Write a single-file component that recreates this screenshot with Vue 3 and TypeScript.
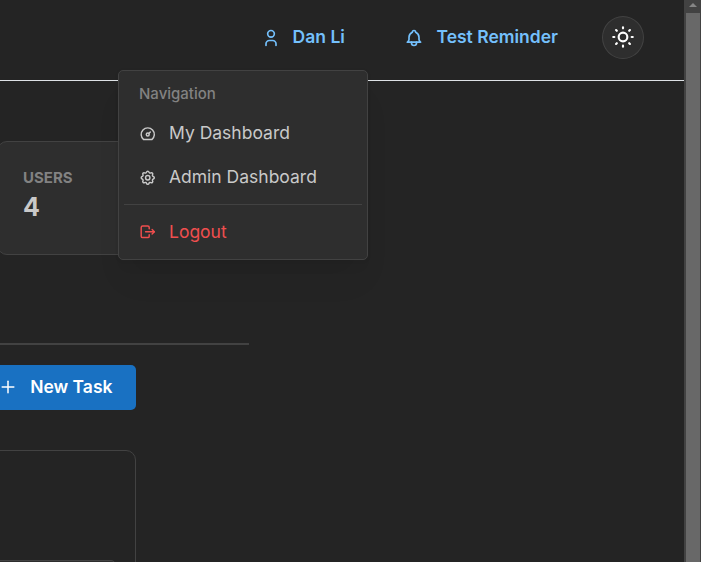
<script setup lang="ts">
interface NavItem {
  label: string
  icon: string[]
}

const icons: Record<string, string[]> = {
  user: ['M8 7a4 4 0 1 0 8 0a4 4 0 0 0-8 0', 'M6 21v-2a4 4 0 0 1 4-4h4a4 4 0 0 1 4 4v2'],
  bell: ['M10 5a2 2 0 1 1 4 0a7 7 0 0 1 4 6v3a4 4 0 0 0 2 3h-16a4 4 0 0 0 2-3v-3a7 7 0 0 1 4-6', 'M9 17v1a3 3 0 0 0 6 0v-1'],
  sun: ['M8 12a4 4 0 1 0 8 0a4 4 0 1 0-8 0', 'M3 12h1m8-9v1m8 8h1m-9 8v1m-6.4-15.4l.7.7m12.1-.7l-.7.7m0 11.4l.7.7m-12.1-.7l-.7.7'],
  dashboard: ['M10 13a2 2 0 1 0 4 0a2 2 0 1 0-4 0', 'M13.45 11.55l2.05-2.05', 'M6.4 20a9 9 0 1 1 11.2 0z'],
  settings: [
    'M10.325 4.317c.426-1.756 2.924-1.756 3.35 0a1.724 1.724 0 0 0 2.573 1.066c1.543-.94 3.31.826 2.37 2.37a1.724 1.724 0 0 0 1.065 2.572c1.756.426 1.756 2.924 0 3.35a1.724 1.724 0 0 0-1.066 2.573c.94 1.543-.826 3.31-2.37 2.37a1.724 1.724 0 0 0-2.572 1.065c-.426 1.756-2.924 1.756-3.35 0a1.724 1.724 0 0 0-2.573-1.066c-1.543.94-3.31-.826-2.37-2.37a1.724 1.724 0 0 0-1.065-2.572c-1.756-.426-1.756-2.924 0-3.35a1.724 1.724 0 0 0 1.066-2.573c-.94-1.543.826-3.31 2.37-2.37c1 .608 2.296.07 2.572-1.065z',
    'M9 12a3 3 0 1 0 6 0a3 3 0 0 0-6 0',
  ],
  logout: ['M14 8v-2a2 2 0 0 0-2-2h-7a2 2 0 0 0-2 2v12a2 2 0 0 0 2 2h7a2 2 0 0 0 2-2v-2', 'M9 12h12l-3-3', 'M18 15l3-3'],
  plus: ['M12 5v14', 'M5 12h14'],
}

const links: NavItem[] = [
  { label: 'Dan Li', icon: icons.user },
  { label: 'Test Reminder', icon: icons.bell },
]

const menuItems: NavItem[] = [
  { label: 'My Dashboard', icon: icons.dashboard },
  { label: 'Admin Dashboard', icon: icons.settings },
]
</script>

<template>
  <div class="window">
    <div class="page">
      <header class="header">
        <button v-for="link in links" :key="link.label" class="link">
          <svg class="icon" viewBox="0 0 24 24"><path v-for="d in link.icon" :key="d" :d="d" /></svg>
          <span>{{ link.label }}</span>
        </button>
        <button class="theme" aria-label="Toggle theme">
          <svg class="icon" viewBox="0 0 24 24"><path v-for="d in icons.sun" :key="d" :d="d" /></svg>
        </button>
      </header>

      <main class="main">
        <section class="stat">
          <div class="stat-label">USERS</div>
          <div class="stat-value">4</div>
        </section>
        <div class="rule"></div>
        <button class="new-task">
          <svg class="icon" viewBox="0 0 24 24"><path v-for="d in icons.plus" :key="d" :d="d" /></svg>
          <span>New Task</span>
        </button>
        <section class="panel"><div class="inner"></div></section>
      </main>

      <nav class="menu">
        <div class="menu-label">Navigation</div>
        <button v-for="item in menuItems" :key="item.label" class="menu-item">
          <svg class="icon" viewBox="0 0 24 24"><path v-for="d in item.icon" :key="d" :d="d" /></svg>
          <span>{{ item.label }}</span>
        </button>
        <div class="divider"></div>
        <button class="menu-item danger">
          <svg class="icon" viewBox="0 0 24 24"><path v-for="d in icons.logout" :key="d" :d="d" /></svg>
          <span>Logout</span>
        </button>
      </nav>
    </div>
    <div class="scrollbar">
      <div class="arrow"></div>
      <div class="thumb"></div>
    </div>
  </div>
</template>

<style>
body {
  margin: 0;
  background: #242424;
}
</style>

<style scoped>
.window,
.window * {
  box-sizing: border-box;
}
.window {
  display: flex;
  width: 701px;
  height: 562px;
  overflow: hidden;
  background: #242424;
  color: #c9c9c9;
  font-family: Inter, "Liberation Sans", sans-serif;
}
button {
  display: flex;
  align-items: center;
  margin: 0;
  padding: 0;
  border: 0;
  background: none;
  color: inherit;
  font: inherit;
}
.icon {
  flex: none;
  fill: none;
  stroke: currentColor;
  stroke-width: 2;
  stroke-linecap: round;
  stroke-linejoin: round;
}
.page {
  position: relative;
  flex: none;
  width: 684px;
  overflow: hidden;
}
.header {
  display: flex;
  align-items: center;
  justify-content: flex-end;
  height: 81px;
  padding: 0 40px 6px 0;
  border-bottom: 1px solid #dee2e6;
}
.link {
  gap: 12px;
  margin-right: 44px;
  color: #74c0fc;
  font-size: 17.5px;
  font-weight: 600;
  line-height: 22px;
  white-space: nowrap;
}
.link:first-child {
  margin-right: 59.6px;
}
.link .icon {
  width: 20px;
  height: 20px;
  margin-top: 2px;
}
.theme {
  justify-content: center;
  width: 42px;
  height: 43px;
  padding-right: 1px;
  border: 1px solid #424242;
  border-radius: 50%;
  background: #2e2e2e;
  color: #fff;
}
.theme .icon {
  width: 26px;
  height: 26px;
}
.main {
  display: flex;
  flex-direction: column;
  align-items: flex-start;
  padding-top: 60px;
}
.stat {
  width: 230px;
  height: 114px;
  margin-left: -3px;
  padding: 25px 25px 0;
  border: 1px solid #424242;
  border-radius: 10px;
  background: #2e2e2e;
}
.stat-label {
  color: #828282;
  font-size: 15px;
  font-weight: 700;
  line-height: 22px;
}
.stat-value {
  font-size: 25px;
  font-weight: 700;
  line-height: 36px;
}
.rule {
  width: 249px;
  height: 2px;
  margin-top: 88px;
  background: #424242;
}
.new-task {
  justify-content: flex-end;
  gap: 12px;
  width: 146px;
  height: 45px;
  margin: 20px 0 0 -10px;
  padding: 0 23.5px 1px 0;
  border-radius: 5px;
  background: #1971c2;
  color: #fff;
  font-size: 17.5px;
  font-weight: 600;
  line-height: 22px;
  white-space: nowrap;
}
.new-task .icon {
  width: 20px;
  height: 20px;
  stroke-width: 1.8;
}
.panel {
  width: 146px;
  height: 180px;
  margin: 40px 0 0 -10px;
  padding: 109px 19px 0 0;
  border: 1px solid #424242;
  border-radius: 10px;
}
.inner {
  height: 60px;
  border: 1px solid #424242;
  border-radius: 5px;
  background: #2e2e2e;
}
.menu {
  position: absolute;
  top: 70px;
  left: 118px;
  width: 250px;
  height: 190px;
  padding: 4px 5px;
  border: 1px solid #424242;
  border-radius: 5px;
  background: #2e2e2e;
  box-shadow: 0 1px 4px rgba(0, 0, 0, 0.05), 0 25px 31px -6px rgba(0, 0, 0, 0.05), 0 12px 12px -6px rgba(0, 0, 0, 0.04);
}
.menu-label {
  height: 36px;
  padding: 0 15px;
  color: #828282;
  font-size: 15px;
  font-weight: 500;
  line-height: 37px;
}
.menu-item {
  gap: 12.5px;
  width: 100%;
  height: 44px;
  padding: 0 15px;
  font-size: 17.5px;
  line-height: 22px;
}
.menu-item .icon {
  width: 17.5px;
  height: 17.5px;
  margin-top: 1px;
}
.divider {
  height: 1px;
  margin: 5px 0;
  background: #424242;
}
.danger {
  color: #f04e4e;
}
.danger .icon {
  margin-top: 0;
}
.scrollbar {
  display: flex;
  flex-direction: column;
  align-items: center;
  flex: none;
  width: 17px;
  background: #424242;
}
.arrow {
  width: 0;
  height: 0;
  margin: 3px 0 6px 1px;
  border: 4px solid transparent;
  border-top: 0;
  border-bottom-color: #858585;
}
.thumb {
  flex: 1;
  width: 14px;
  margin-left: 1px;
  background: #686868;
}
</style>
